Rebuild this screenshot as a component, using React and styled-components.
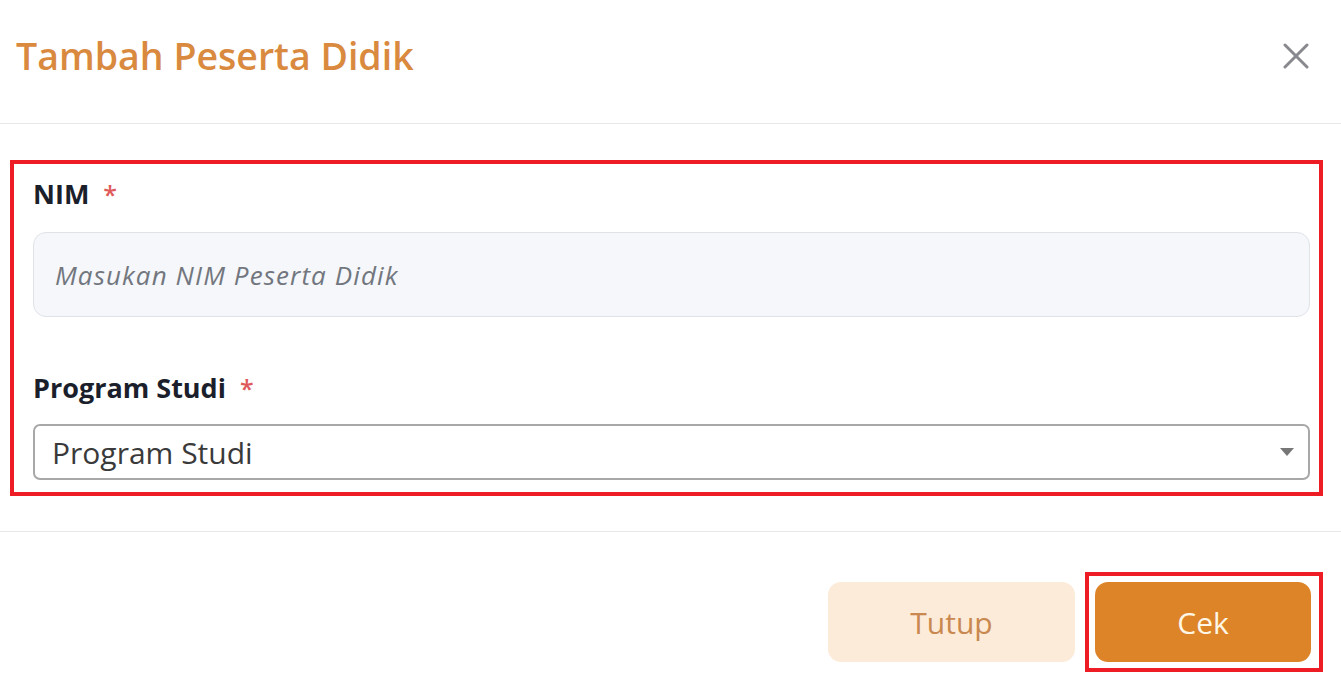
import React from "react";
import styled, { createGlobalStyle } from "styled-components";

const Global = createGlobalStyle`
  html, body { margin: 0; padding: 0; background: #ffffff; }
  body { font-family: "Open Sans", "Noto Sans", sans-serif; }
  * { box-sizing: border-box; }
`;

const Modal = styled.div`
  width: 1341px;
  height: 682px;
  background: #fff;
  display: flex;
  flex-direction: column;
  overflow: hidden;
`;

const Header = styled.div`
  height: 124px;
  flex-shrink: 0;
  display: flex;
  align-items: center;
  justify-content: space-between;
  padding: 0 30px 12px 16px;
  border-bottom: 1.5px solid #e7e7e9;
`;

const Title = styled.h1`
  margin: 0;
  font-size: 37.5px;
  font-weight: 600;
  color: #d98a3f;
  letter-spacing: 0;
`;

const CloseBtn = styled.button`
  border: 0;
  background: none;
  padding: 0;
  width: 30px;
  height: 30px;
  display: flex;
  align-items: center;
  justify-content: center;
  cursor: pointer;
`;

const Body = styled.div`
  padding: 36px 18px 35px 10px;
  border-bottom: 1.5px solid #e7e7e9;
`;

const Highlight = styled.div`
  border: 4px solid #ee1c25;
  padding: 10px 9px 12px 19px;
  display: flex;
  flex-direction: column;
`;

const Field = styled.div`
  display: flex;
  flex-direction: column;
  margin-bottom: ${(p) => p.$mb || 0}px;
`;

const Label = styled.label`
  font-size: 27px;
  font-weight: 700;
  color: #1b1e2b;
  height: 40px;
  line-height: 40px;
  margin-bottom: ${(p) => p.$gap}px;
  span {
    color: #e05a5a;
    margin-left: 14px;
    font-weight: 600;
    font-size: 25px;
  }
`;

const TextInput = styled.input`
  height: 85px;
  width: 100%;
  border: 1.5px solid #dfe3e8;
  border-radius: 13px;
  background: #f5f7fa;
  padding: 0 21px;
  font-family: "Open Sans", sans-serif;
  font-size: 26px;
  letter-spacing: 1.1px;
  font-style: italic;
  color: #333;
  outline: none;
  &::placeholder {
    color: #72767e;
    font-style: italic;
  }
`;

const SelectBox = styled.div`
  height: 56px;
  border: 2px solid #a8a8a8;
  border-radius: 7px;
  display: flex;
  align-items: center;
  justify-content: space-between;
  padding: 0 14px 0 17px;
  font-size: 30px;
  color: #3a3a3a;
`;

const Caret = styled.span`
  width: 0;
  height: 0;
  border-left: 7px solid transparent;
  border-right: 7px solid transparent;
  border-top: 8px solid #777;
`;

const Footer = styled.div`
  flex: 1;
  display: flex;
  justify-content: flex-end;
  align-items: flex-start;
  padding: 40px 18px 0 0;
  gap: 10px;
`;

const BtnFrame = styled.div`
  border: 4px solid #ee1c25;
  padding: 6px 8px 6px 6px;
`;

const Button = styled.button`
  height: 80px;
  width: ${(p) => p.$w}px;
  margin-top: ${(p) => p.$mt || 0}px;
  border: 0;
  border-radius: 13px;
  font-family: "Open Sans", sans-serif;
  font-size: 30px;
  font-weight: 400;
  cursor: pointer;
  background: ${(p) => (p.$primary ? "#dd8428" : "#fdebd9")};
  color: ${(p) => (p.$primary ? "#fff6e6" : "#c8884f")};
`;

export default function App() {
  return (
    <>
      <Global />
      <Modal>
        <Header>
          <Title>Tambah Peserta Didik</Title>
          <CloseBtn aria-label="close">
            <svg width="26" height="26" viewBox="0 0 26 26">
              <path d="M2 2 L24 24 M24 2 L2 24" stroke="#88898e" strokeWidth="3" strokeLinecap="round" />
            </svg>
          </CloseBtn>
        </Header>
        <Body>
          <Highlight>
            <Field $mb={51}>
              <Label $gap={18}>
                NIM<span>*</span>
              </Label>
              <TextInput placeholder="Masukan NIM Peserta Didik" />
            </Field>
            <Field>
              <Label $gap={16}>
                Program Studi<span>*</span>
              </Label>
              <SelectBox>
                Program Studi
                <Caret />
              </SelectBox>
            </Field>
          </Highlight>
        </Body>
        <Footer>
          <Button $w={247} $mt={10}>Tutup</Button>
          <BtnFrame>
            <Button $primary $w={216}>Cek</Button>
          </BtnFrame>
        </Footer>
      </Modal>
    </>
  );
}
